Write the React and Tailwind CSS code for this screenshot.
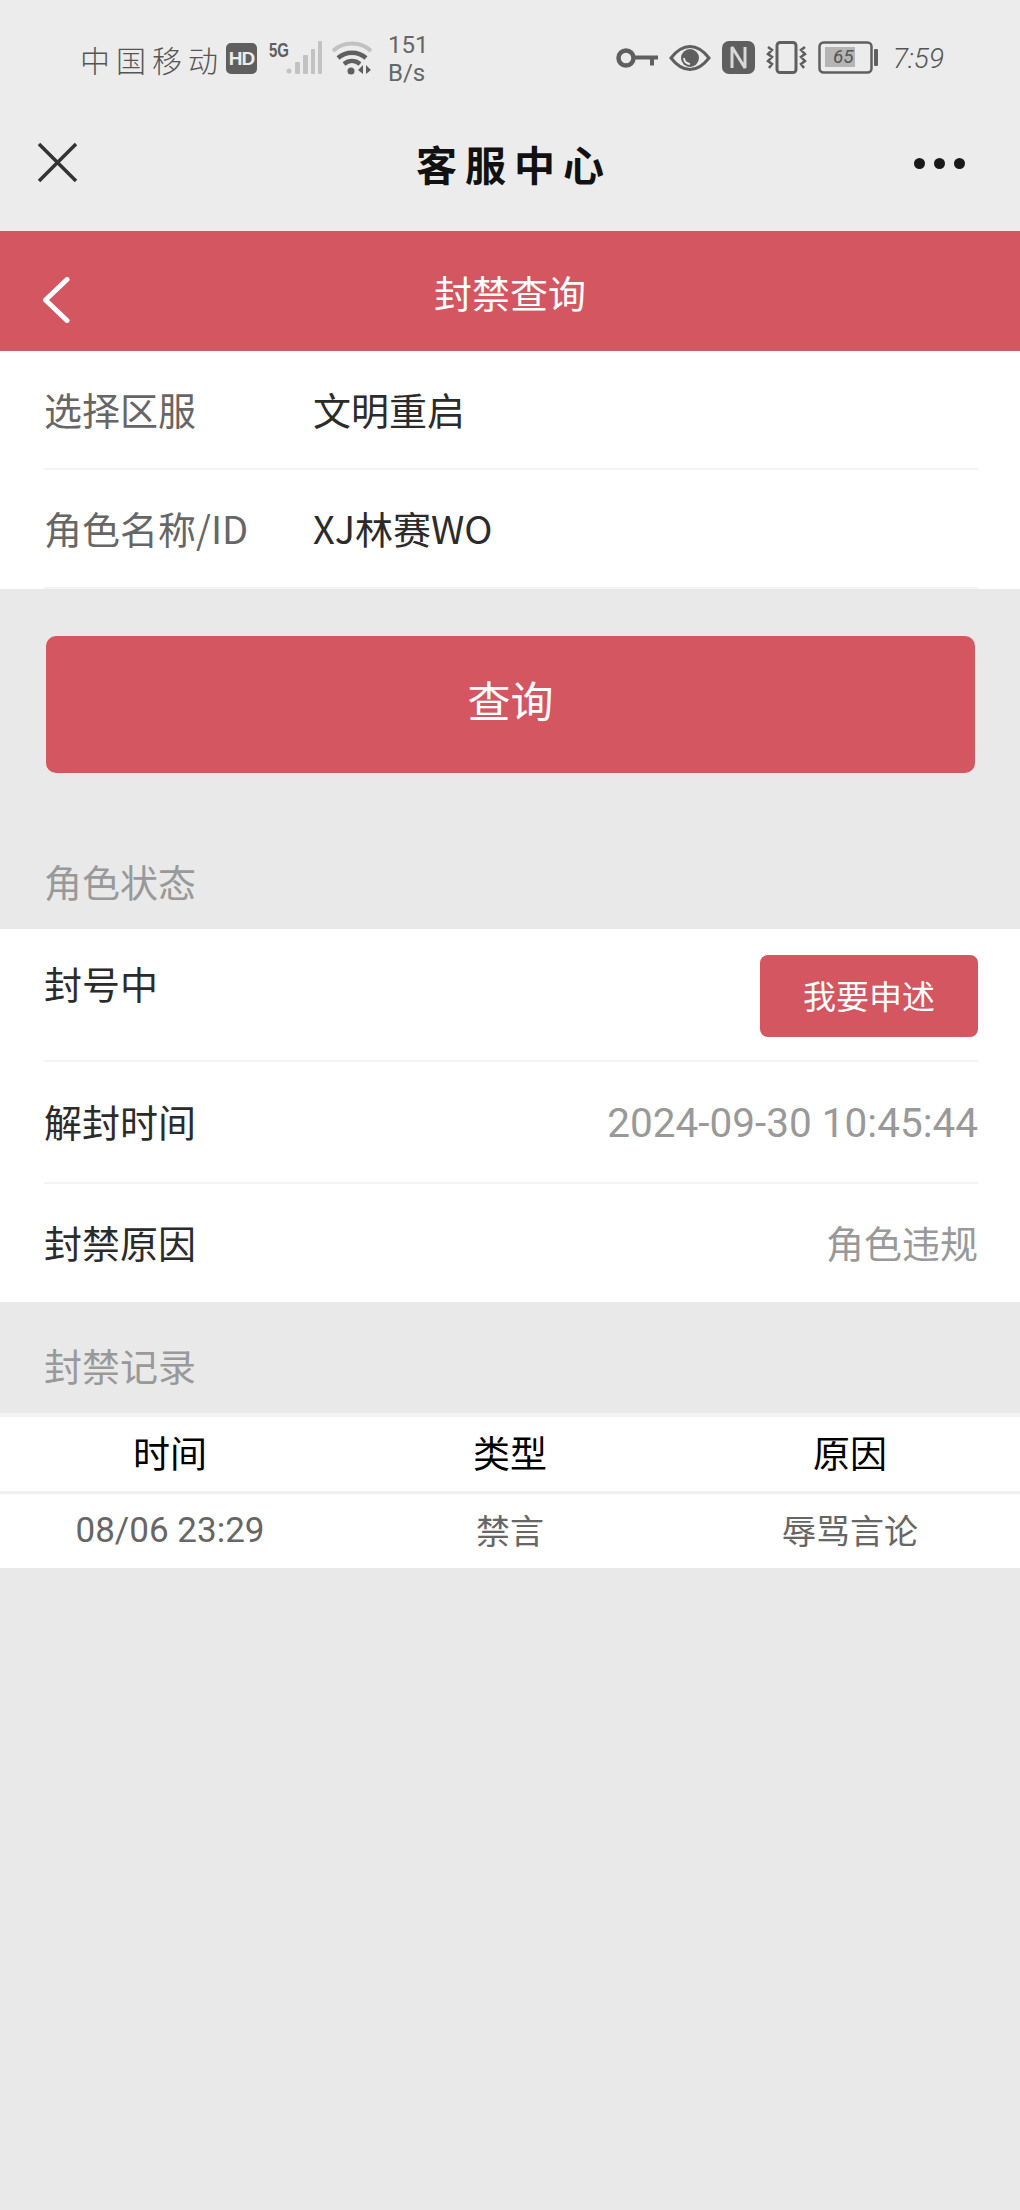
import React from "react";

const cjk = { fontFamily: '"Noto Sans CJK SC", sans-serif' };
const roboto = { fontFamily: "Roboto, sans-serif" };
const arial = { fontFamily: '"Liberation Sans", sans-serif' };

function StatusIcons() {
  return (
    <div className="flex items-center">
      <svg width="42" height="20" viewBox="0 0 42 20" className="text-[#5f5f5f]">
        <circle cx="10" cy="10" r="7.500" fill="none" stroke="currentColor" strokeWidth="4.500" />
        <path d="M18 7.500h24v4h-4v6h-4v-6H18z" fill="currentColor" />
      </svg>
      <svg width="42" height="28" viewBox="0 0 42 28" className="ml-[11px] text-[#5f5f5f]">
        <path d="M2 14C9 5 15 2.500 21 2.500S33 5 40 14c-7 9-13 11.500-19 11.500S9 23 2 14z" fill="none" stroke="currentColor" strokeWidth="3" />
        <circle cx="21" cy="14" r="9" fill="currentColor" />
        <path d="M15 14a6 6 0 0 0 6 6" fill="none" stroke="#ececec" strokeWidth="1.800" />
      </svg>
      <svg width="33" height="33" viewBox="0 0 33 33" className="ml-[11px] text-[#5f5f5f]">
        <rect width="33" height="33" rx="7" fill="currentColor" />
        <path d="M10 27V6l13 21V6" fill="none" stroke="#d8d8d8" strokeWidth="3" strokeLinejoin="bevel" />
      </svg>
      <svg width="41" height="33" viewBox="0 0 41 33" className="ml-[11px] text-[#5f5f5f]">
        <rect x="11" y="1.500" width="19" height="30" rx="3" fill="none" stroke="currentColor" strokeWidth="3" />
        <path d="M2 6l4 3-4 4 4 3-4 4 4 3-3 4M39 6l-4 3 4 4-4 3 4 4-4 3 3 4" fill="none" stroke="currentColor" strokeWidth="2.500" />
      </svg>
      <div className="relative ml-[11px] h-[33px] w-[57px]">
        <svg width="57" height="33" viewBox="0 0 57 33" className="text-[#5f5f5f]">
          <rect x="1.500" y="1.500" width="52" height="30" rx="4" fill="none" stroke="currentColor" strokeWidth="2.500" />
          <rect x="7" y="6" width="30" height="20" fill="#b5b5b5" />
        </svg>
        <span className="absolute left-[15px] top-[4px] text-[19px] italic leading-[24px] text-[#555]" style={roboto}>65</span>
      </div>
    </div>
  );
}

function Row({ label, value }) {
  return (
    <div className="ml-[44px] mr-[42px] flex h-[119px] items-center border-b-2 border-[#f3f3f3] pb-[3px] text-[38px]">
      <span className="w-[269px] text-[#666]">{label}</span>
      <span className="text-[#2b2b2b]">{value}</span>
    </div>
  );
}

export default function App() {
  return (
    <div className="flex min-h-[2210px] flex-col bg-[#e9e9e9]" style={cjk}>
      {/* system status bar and wechat title bar */}
      <div className="h-[231px] bg-[#ececec]">
        <div className="flex h-[116px] items-start justify-between pl-[80px] pr-[76px] pt-[35px]">
          <div className="flex items-start">
            <span className="mt-[2px] text-[30px] font-light leading-[44px] tracking-[6px] text-[#555]">中国移动</span>
            <span className="ml-[2px] mt-[8px] flex h-[31px] w-[31px] items-center justify-center rounded-[5px] bg-[#5f5f5f] text-[19px] font-bold leading-none tracking-[-1px] text-[#ececec]" style={arial}>HD</span>
            <span className="ml-[12px] mt-[6px] w-[17px] origin-top-left scale-x-75 text-[20px] font-bold leading-[18px] text-[#5f5f5f]" style={arial}>5G</span>
            <svg width="36" height="33" viewBox="0 0 36 33" className="mt-[6px]">
              <g fill="#c2c2c2">
                <circle cx="3" cy="30" r="2.500" />
                <rect x="9" y="21" width="5" height="12" rx="1" />
                <rect x="17" y="14" width="5" height="19" rx="1" />
                <rect x="25" y="8" width="4" height="25" rx="1" />
                <rect x="32" y="0" width="4" height="33" rx="1" />
              </g>
            </svg>
            <svg width="42" height="34" viewBox="0 0 42 34" className="ml-[10px] mt-[6px]">
              <path d="M1 10C11 0 29 0 39 10" fill="none" stroke="#c2c2c2" strokeWidth="4" />
              <path d="M6 17c8-7 20-7 28 0M12 23c5-4 11-4 16 0" fill="none" stroke="#5f5f5f" strokeWidth="4.500" />
              <circle cx="19" cy="30" r="3.500" fill="#5f5f5f" />
              <path d="M31 24v9l-5-4zM34 24v9l5-4z" fill="#5f5f5f" />
            </svg>
            <div className="ml-[14px] mt-[-4px] w-[40px] text-[24px] leading-[28px] text-[#666]" style={roboto}>
              <div>151</div>
              <div>B/s</div>
            </div>
          </div>
          <div className="mt-[6px] flex items-center">
            <StatusIcons />
            <svg width="4" height="17" viewBox="0 0 4 17" className="ml-[-1px]">
              <rect width="4" height="17" rx="1" fill="#5f5f5f" />
            </svg>
            <span className="ml-[15px] mt-[2px] text-[28px] font-light italic leading-none text-[#555]" style={roboto}>7:59</span>
          </div>
        </div>
        <div className="flex h-[94px] items-center px-[37px]">
          <div className="flex-1">
            <svg width="41" height="41" viewBox="0 0 41 41" className="mt-[-1px]">
              <path d="M2 2l37 37M39 2L2 39" fill="none" stroke="#333" strokeWidth="3.500" />
            </svg>
          </div>
          <span className="pl-[8px] text-[41px] font-bold leading-none tracking-[8px] text-[#111]">客服中心</span>
          <div className="flex flex-1 justify-end">
            <div className="mr-[18px] flex gap-[9px]">
              <span className="h-[11px] w-[11px] rounded-full bg-[#1a1a1a]" />
              <span className="h-[11px] w-[11px] rounded-full bg-[#1a1a1a]" />
              <span className="h-[11px] w-[11px] rounded-full bg-[#1a1a1a]" />
            </div>
          </div>
        </div>
      </div>

      {/* red page header */}
      <div className="relative flex h-[120px] items-center justify-center bg-[#d35661] text-[38px] text-white">
        <svg width="28" height="46" viewBox="0 0 28 46" className="absolute left-[42px] top-[46px]">
          <path d="M25 2.500L3.500 23 25 43.500" fill="none" stroke="#fff" strokeWidth="5" strokeLinecap="round" strokeLinejoin="round" />
        </svg>
        <span>封禁查询</span>
      </div>

      <div className="bg-white">
        <Row label="选择区服" value="文明重启" />
        <Row label="角色名称/ID" value="XJ林赛WO" />
      </div>

      <div className="ml-[46px] mr-[45px] mt-[47px] flex h-[137px] items-center justify-center rounded-[10px] bg-[#d35661] pb-[10px] text-[43px] text-white">查询</div>

      <div className="mx-[44px] mt-[78px] text-[38px] leading-[60px] text-[#999]">角色状态</div>

      <div className="mt-[18px] bg-white text-[38px] text-[#2b2b2b]">
        <div className="ml-[44px] mr-[42px] flex h-[133px] items-start justify-between border-b-2 border-[#f3f3f3] pt-[26px]">
          <span className="mt-[-2px] leading-[60px]">封号中</span>
          <span className="flex h-[82px] w-[218px] items-center justify-center rounded-[8px] bg-[#d35661] text-[33px] text-white">我要申述</span>
        </div>
        <div className="ml-[44px] mr-[42px] flex h-[120px] items-center justify-between">
          <span className="mb-[3px]">解封时间</span>
          <span className="mt-[2px] text-[40.500px] text-[#999]" style={roboto}>2024-09-30 10:45:44</span>
        </div>
        <div className="ml-[44px] mr-[42px] h-[2px] bg-[#f3f3f3]" />
        <div className="ml-[44px] mr-[42px] flex h-[118px] items-center justify-between pb-[3px]">
          <span>封禁原因</span>
          <span className="text-[#999]">角色违规</span>
        </div>
      </div>

      <div className="mx-[44px] mt-[33px] text-[38px] leading-[60px] text-[#999]">封禁记录</div>

      <div className="mt-[18px] border-t-4 border-[#f4f4f4] bg-white text-center">
        <div className="grid h-[77px] grid-cols-3 items-center border-b-[3px] border-[#f0f0f0] pb-[3px] text-[37px] text-black">
          <span>时间</span>
          <span>类型</span>
          <span>原因</span>
        </div>
        <div className="grid h-[74px] grid-cols-3 items-center text-[34px] text-[#666]">
          <span className="text-[35px]" style={roboto}>08/06 23:29</span>
          <span className="mb-[3px]">禁言</span>
          <span className="mb-[3px]">辱骂言论</span>
        </div>
      </div>
    </div>
  );
}
